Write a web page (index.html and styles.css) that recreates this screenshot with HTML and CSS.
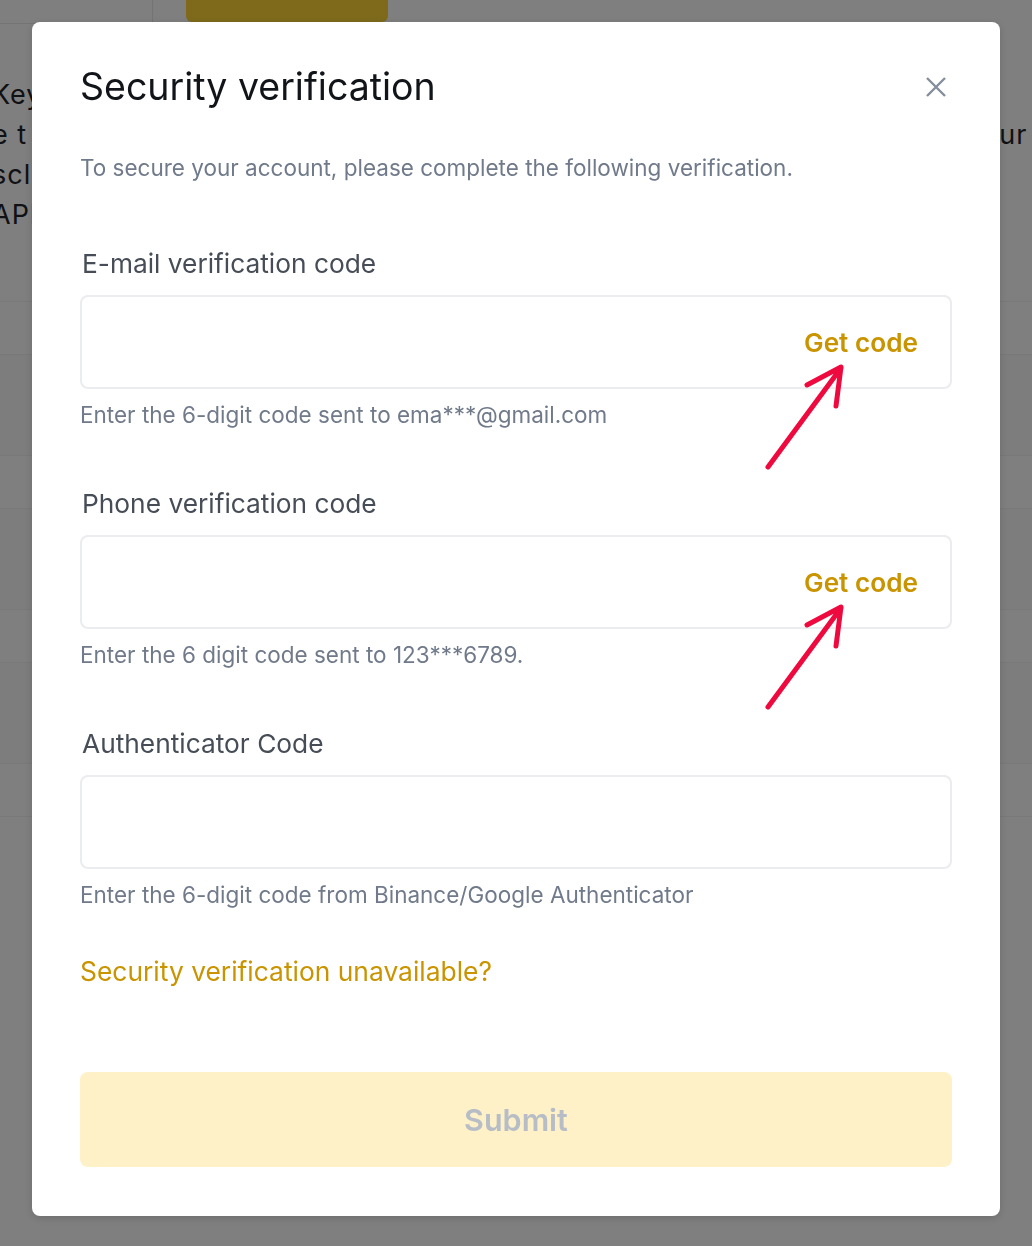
FILE: index.html
```html
<!DOCTYPE html>
<html lang="en">
<head>
    <meta charset="UTF-8">
    <meta name="viewport" content="width=device-width, initial-scale=1.0">
    <title>Security verification</title>
    <link rel="stylesheet" href="styles.css">
</head>
<body>
    <!-- page behind the modal -->
    <div class="page">
        <div class="page-top">
            <div class="page-tab"></div>
            <div class="page-btn"></div>
        </div>
        <div class="page-text">
            <p>Key</p>
            <p class="split"><span>e t</span><span class="tail">our a</span></p>
            <p>scl</p>
            <p>API</p>
        </div>
        <div class="page-rows">
            <div class="row"></div>
            <div class="row"></div>
            <div class="row band"></div>
            <div class="row"></div>
            <div class="row band"></div>
            <div class="row"></div>
            <div class="row band"></div>
            <div class="row"></div>
        </div>
    </div>

    <div class="overlay">
        <div class="modal">
            <div class="modal-head">
                <h2>Security verification</h2>
                <button class="close" aria-label="Close">
                    <svg width="24" height="24" viewBox="0 0 24 24">
                        <path d="M3 3L21 21M21 3L3 21" stroke="#848E9C" stroke-width="2.4" fill="none"/>
                    </svg>
                </button>
            </div>
            <p class="intro">To secure your account, please complete the following verification.</p>

            <div class="field">
                <label>E-mail verification code</label>
                <div class="input-wrap">
                    <div class="input-box">
                        <input type="text">
                        <button class="get-code">Get code</button>
                    </div>
                    <!-- annotation arrow -->
                    <svg class="arrow" width="90" height="115" viewBox="0 0 90 115">
                        <path d="M8 107L81 8M47 25L81 7L76 46" stroke="#EE0A3E" stroke-width="5" fill="none" stroke-linecap="round" stroke-linejoin="round"/>
                    </svg>
                </div>
                <p class="hint">Enter the 6-digit code sent to ema***@gmail.com</p>
            </div>

            <div class="field">
                <label>Phone verification code</label>
                <div class="input-wrap">
                    <div class="input-box">
                        <input type="text">
                        <button class="get-code">Get code</button>
                    </div>
                    <svg class="arrow" width="90" height="115" viewBox="0 0 90 115">
                        <path d="M8 107L81 8M47 25L81 7L76 46" stroke="#EE0A3E" stroke-width="5" fill="none" stroke-linecap="round" stroke-linejoin="round"/>
                    </svg>
                </div>
                <p class="hint">Enter the 6 digit code sent to 123***6789.</p>
            </div>

            <div class="field">
                <label>Authenticator Code</label>
                <div class="input-wrap">
                    <div class="input-box">
                        <input type="text">
                    </div>
                </div>
                <p class="hint">Enter the 6-digit code from Binance/Google Authenticator</p>
            </div>

            <a class="help-link" href="#">Security verification unavailable?</a>

            <button class="submit" disabled>Submit</button>
        </div>
    </div>
</body>
</html>
```

FILE: styles.css
```css
body {
    margin: 0;
    padding: 0;
    height: 1246px;
    overflow: hidden;
    background-color: #fff;
    font-family: 'Inter', 'Noto Sans', sans-serif;
}

/* background page */
.page {
    height: 100%;
    color: #1E2329;
}

.page-top {
    display: flex;
    height: 24px;
}

.page-tab {
    width: 152px;
    border-right: 1px solid #E6E8EA;
    border-bottom: 1px solid #E6E8EA;
}

.page-btn {
    width: 202px;
    margin-left: 33px;
    margin-top: -20px;
    height: 42px;
    border-radius: 6px;
    background-color: #FCD535;
}

.page-text {
    margin-top: 51px;
    margin-left: -8px;
    font-size: 27px;
    line-height: 40px;
    letter-spacing: 1px;
}

.page-text p {
    margin: 0;
}

.page-text .split {
    display: flex;
    justify-content: space-between;
}

.page-text .tail {
    width: 50px;
    overflow: hidden;
    white-space: nowrap;
}

.page-rows {
    margin-top: 14px;
}

.page-rows .row {
    height: 52px;
    border-bottom: 1px solid #F2F3F4;
}

.page-rows .row.band {
    height: 100px;
    background-color: #FAFAFA;
}

/* modal */
.overlay {
    position: fixed;
    top: 0;
    left: 0;
    right: 0;
    bottom: 0;
    background-color: rgba(0, 0, 0, 0.5);
    display: flex;
    justify-content: center;
    align-items: flex-start;
    padding-top: 22px;
}

.modal {
    width: 872px;
    padding: 40px 48px 49px;
    background-color: #fff;
    border-radius: 8px;
    box-shadow: 0 2px 8px rgba(0, 0, 0, 0.15);
    display: flex;
    flex-direction: column;
}

.modal-head {
    display: flex;
    justify-content: space-between;
    align-items: center;
}

.modal-head h2 {
    margin: 0;
    font-size: 37.5px;
    line-height: 50px;
    font-weight: 400;
    color: #111418;
}

.close {
    border: none;
    background: none;
    padding: 0;
    margin-right: 4px;
    width: 24px;
    height: 24px;
    cursor: pointer;
}

.intro {
    margin: 40px 0 0;
    font-size: 22.5px;
    line-height: 32px;
    color: #707A8A;
}

.field {
    margin-top: 62px;
    display: flex;
    flex-direction: column;
}

.field + .field {
    margin-top: 55px;
}

.field label {
    padding-left: 2px;
    font-size: 26.3px;
    line-height: 36px;
    color: #474D57;
}

.input-wrap {
    position: relative;
    margin-top: 13px;
}

.input-box {
    height: 90px;
    border: 2px solid #EAECEF;
    border-radius: 8px;
    display: flex;
    align-items: center;
    padding: 0 32px 0 20px;
}

.input-box input {
    flex: 1;
    border: none;
    outline: none;
    background: none;
    font-size: 24px;
}

.get-code {
    border: none;
    background: none;
    padding: 0;
    font-family: inherit;
    font-size: 26.2px;
    font-weight: 600;
    color: #C99400;
    cursor: pointer;
}

.arrow {
    position: absolute;
    left: 680px;
    top: 65px;
}

.hint {
    margin: 10px 0 0;
    font-size: 22.5px;
    line-height: 32px;
    color: #707A8A;
}

.help-link {
    margin-top: 42px;
    font-size: 26.4px;
    line-height: 36px;
    color: #C99400;
    text-decoration: none;
}

.submit {
    margin-top: 83px;
    height: 95px;
    border: none;
    border-radius: 8px;
    background-color: #FEF1C7;
    font-family: inherit;
    font-size: 30.5px;
    font-weight: 600;
    color: #B7BDC6;
}
```
